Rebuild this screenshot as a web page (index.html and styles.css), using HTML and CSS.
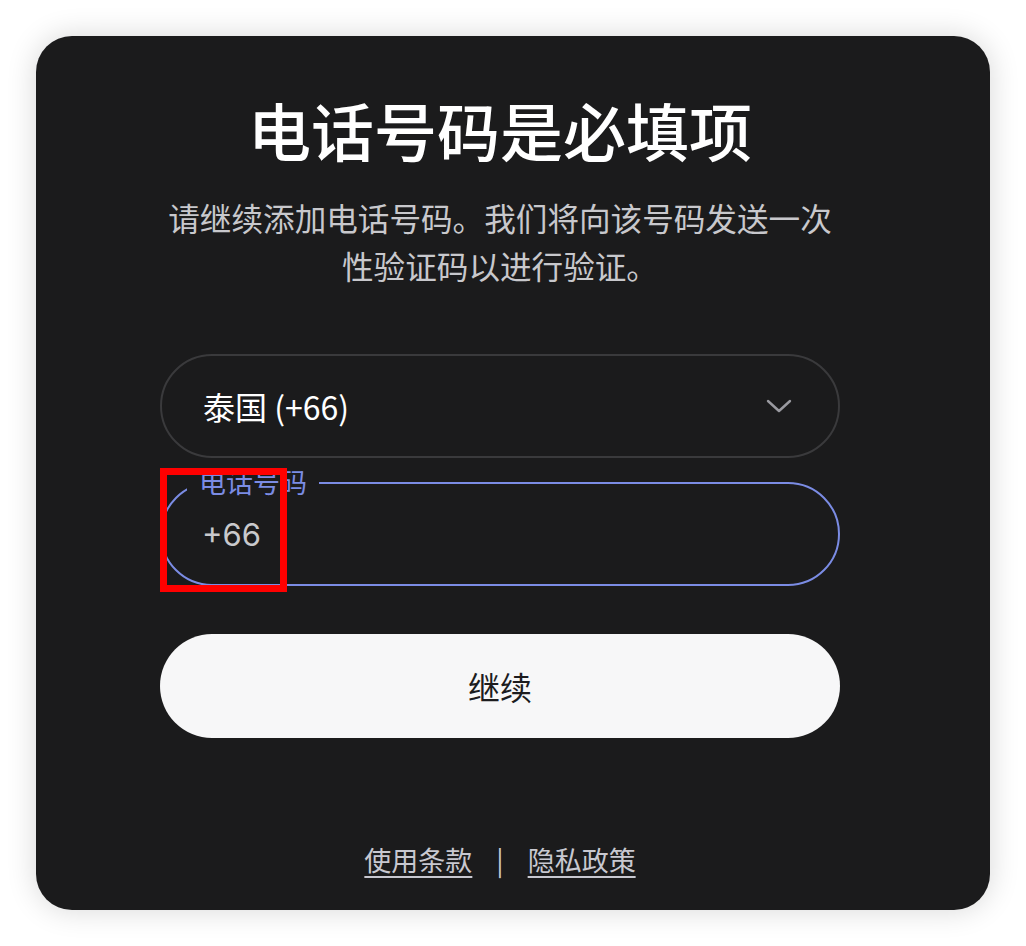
FILE: index.html
```html
<!DOCTYPE html>
<html lang="zh-CN">
<head>
<meta charset="utf-8">
<title>电话号码是必填项</title>
<link rel="stylesheet" href="styles.css">
</head>
<body>
<main class="card">
  <h1 class="title">电话号码是必填项</h1>
  <p class="subtitle">请继续添加电话号码。我们将向该号码发送一次性验证码以进行验证。</p>
  <div class="form">
    <div class="select">
      <span class="select-text">泰国 (+66)</span>
      <svg class="chevron" width="26" height="14" viewBox="0 0 26 14" fill="none"><path d="M2 2 L13 12 L24 2" stroke="#9a9aa0" stroke-width="2.4" stroke-linecap="round" stroke-linejoin="round"/></svg>
    </div>
    <div class="phone">
      <span class="phone-label">电话号码</span>
      <span class="phone-value">+66</span>
      <div class="highlight"></div>
    </div>
    <button class="continue">继续</button>
  </div>
  <footer class="footer">
    <a class="link">使用条款</a>
    <span class="sep">|</span>
    <a class="link">隐私政策</a>
  </footer>
</main>
</body>
</html>
```
FILE: styles.css
```css
html, body {
  margin: 0;
  padding: 0;
  background: #ffffff;
}
body {
  padding: 36px;
  font-family: "Inter", "Noto Sans CJK SC", sans-serif;
}
.card {
  box-sizing: border-box;
  width: 954px;
  height: 874px;
  background: #1b1b1c;
  border-radius: 36px;
  box-shadow: 0 0 30px rgba(0, 0, 0, 0.16);
  padding: 53px 150px 30px 124px;
  display: flex;
  flex-direction: column;
  align-items: stretch;
}
.title {
  margin: 0;
  font-family: "Noto Sans CJK SC", sans-serif;
  font-size: 63px;
  line-height: 80px;
  font-weight: 500;
  color: #ffffff;
  text-align: center;
}
.subtitle {
  margin: 24px 0 0;
  font-family: "Noto Sans CJK SC", sans-serif;
  font-size: 31.6px;
  line-height: 48px;
  color: #c8c8cc;
  text-align: center;
}
.form {
  margin-top: 65px;
  display: flex;
  flex-direction: column;
}
.select {
  box-sizing: border-box;
  height: 104px;
  border: 2px solid #3a3a3c;
  border-radius: 52px;
  padding: 0 46px 0 41px;
  display: flex;
  align-items: center;
  justify-content: space-between;
}
.select-text {
  font-size: 32px;
  color: #ffffff;
  font-family: "Noto Sans CJK SC", sans-serif;
}
.chevron {
  display: block;
}
.phone {
  position: relative;
  box-sizing: border-box;
  margin-top: 24px;
  height: 104px;
  border: 2px solid #7b8ce4;
  border-radius: 52px;
  padding: 0 40px;
  display: flex;
  align-items: center;
}
.phone-label {
  position: absolute;
  left: 25px;
  top: -18px;
  padding: 0 12px;
  background: #1b1b1c;
  font-family: "Noto Sans CJK SC", sans-serif;
  font-size: 27px;
  line-height: 32px;
  color: #7b8ce4;
}
.phone-value {
  font-size: 31px;
  color: #c9c9cc;
}
.highlight {
  position: absolute;
  box-sizing: border-box;
  left: -2px;
  top: -16px;
  width: 127px;
  height: 124px;
  border: 7px solid #ff0000;
}
.continue {
  margin-top: 48px;
  height: 104px;
  border: none;
  border-radius: 52px;
  background: #f7f7f8;
  color: #1c1c1e;
  font-family: "Noto Sans CJK SC", sans-serif;
  font-size: 32px;
  cursor: pointer;
}
.footer {
  margin-top: auto;
  display: flex;
  justify-content: center;
  align-items: center;
  font-family: "Noto Sans CJK SC", sans-serif;
  font-size: 27px;
  line-height: 40px;
  color: #c8c8d0;
}
.link {
  text-decoration: underline;
  text-underline-offset: 5px;
  text-decoration-thickness: 2px;
}
.sep {
  margin: 0 24px;
}
```
